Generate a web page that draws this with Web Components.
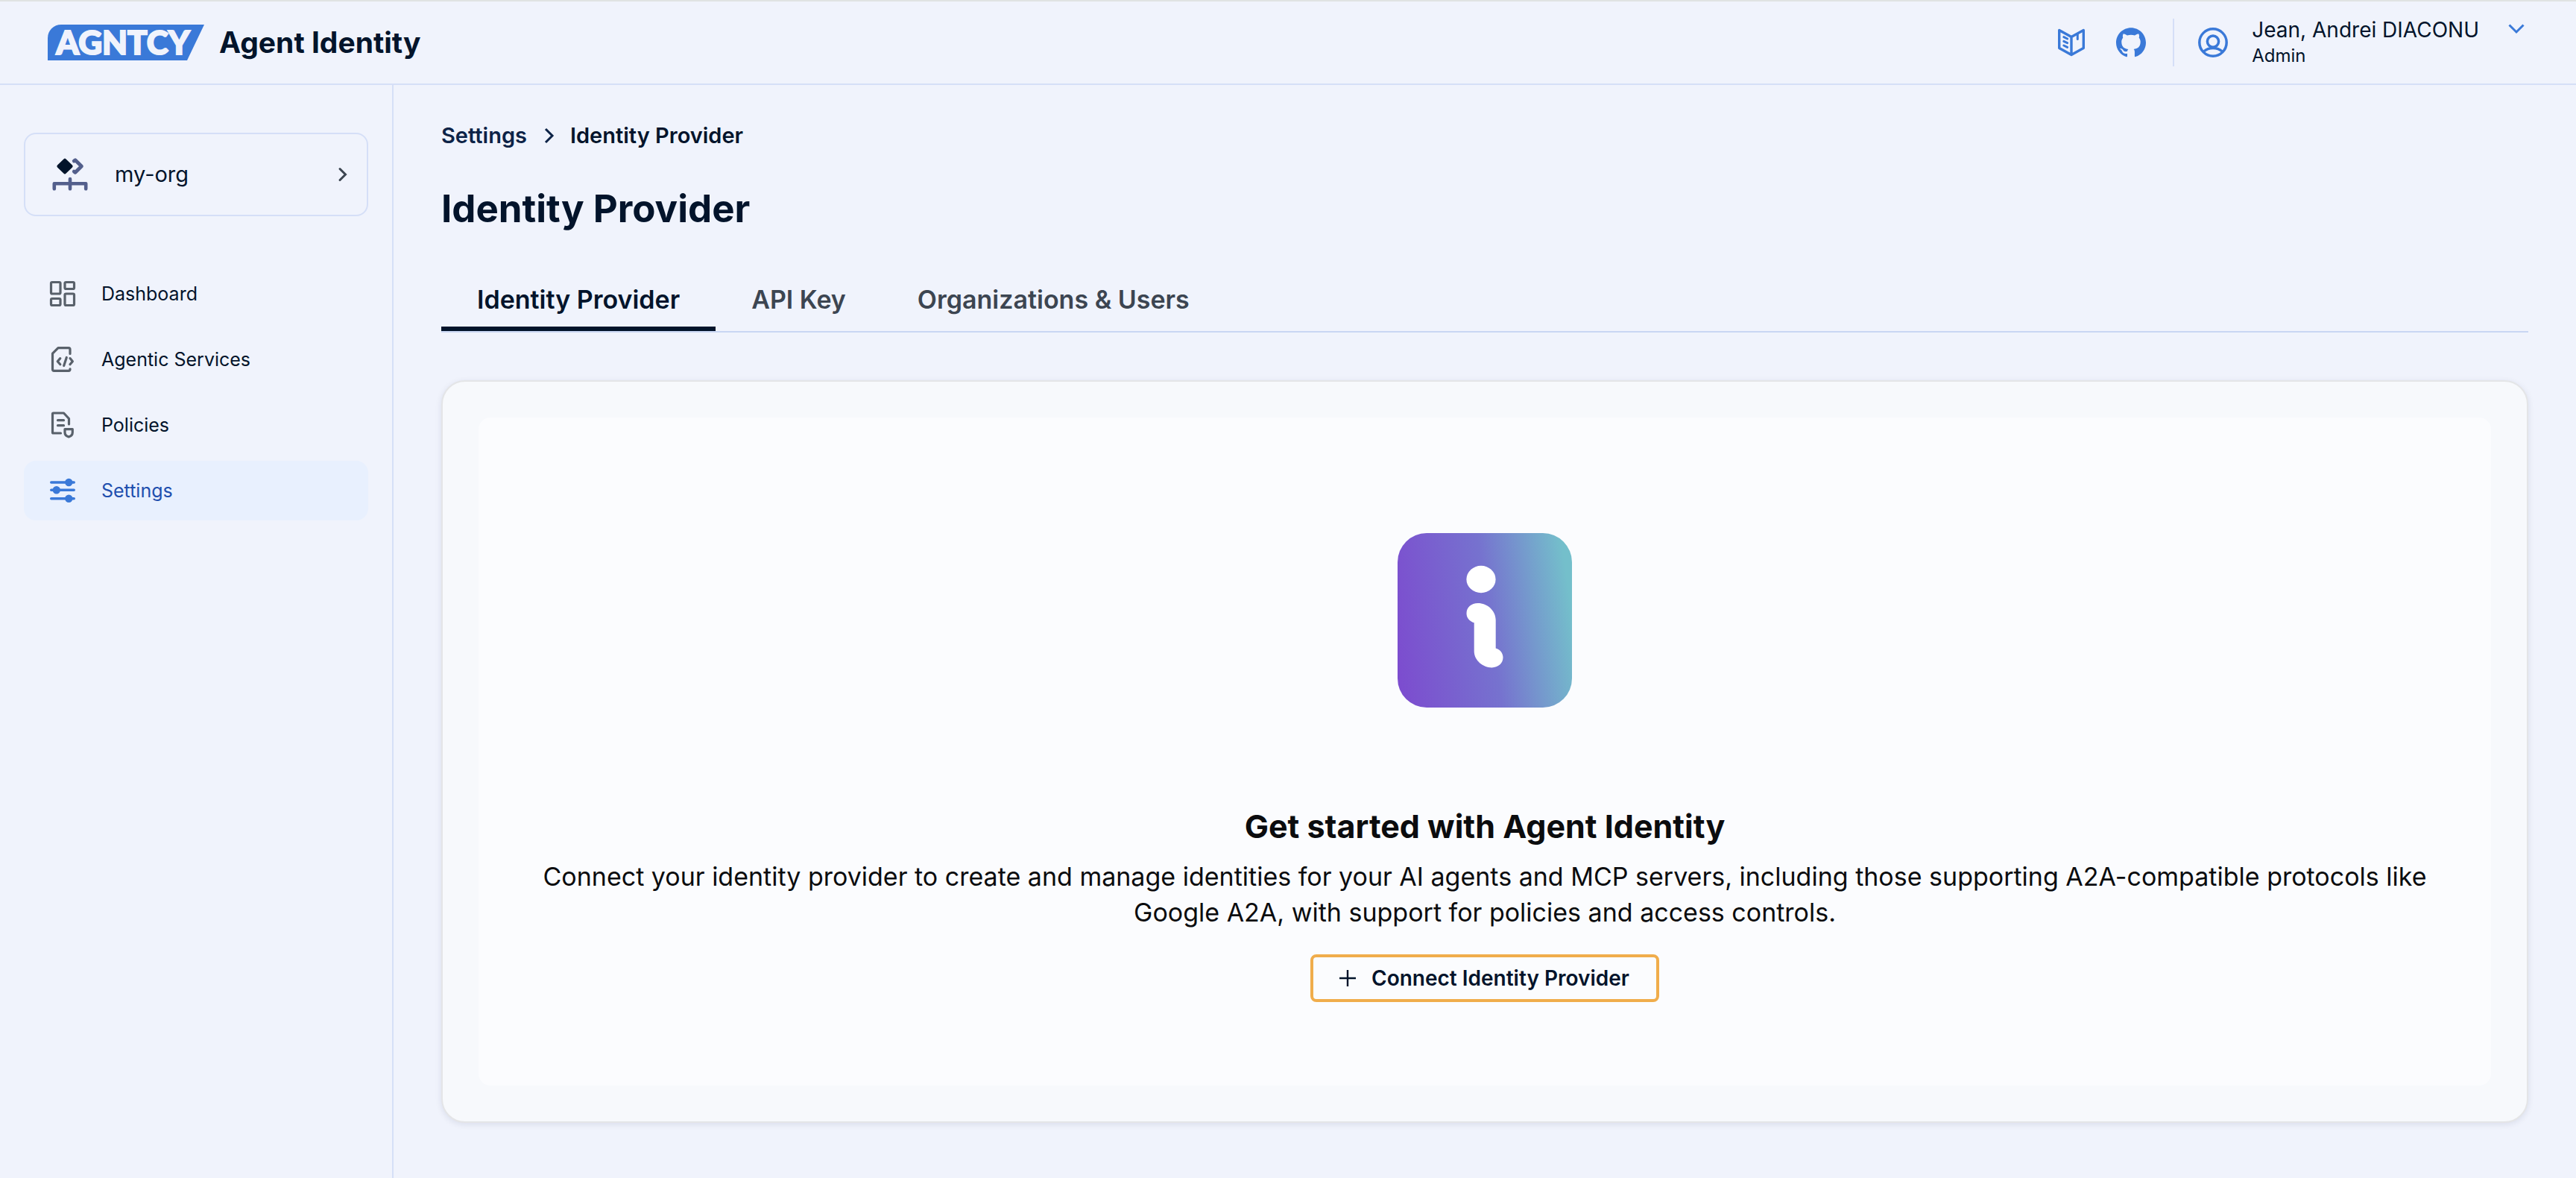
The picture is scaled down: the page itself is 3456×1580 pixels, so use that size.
<!DOCTYPE html>
<html lang="en">
<head>
<meta charset="utf-8">
<title>Agent Identity</title>
<style>
  :root {
    --bg: #f0f3fc;
    --line: #d5dff7;
    --ink: #03142b;
    --blue: #3a79d8;
  }
  body {
    margin: 0;
    background: var(--bg);
    color: var(--ink);
    font-family: Inter, "Liberation Sans", sans-serif;
    font-size: 28px;
    line-height: 40px;
  }
</style>
</head>
<body>
<app-shell>
  <app-header slot="header" product="Agent Identity" user="Jean, Andrei DIACONU" role-name="Admin"></app-header>
  <app-sidebar slot="sidebar">
    <org-switcher slot="org">my-org</org-switcher>
    <nav-item icon="dashboard">Dashboard</nav-item>
    <nav-item icon="services">Agentic Services</nav-item>
    <nav-item icon="policies">Policies</nav-item>
    <nav-item icon="settings" active>Settings</nav-item>
  </app-sidebar>
  <bread-crumb parent="Settings">Identity Provider</bread-crumb>
  <page-title>Identity Provider</page-title>
  <tab-bar>
    <tab-item selected>Identity Provider</tab-item>
    <tab-item>API Key</tab-item>
    <tab-item>Organizations &amp; Users</tab-item>
  </tab-bar>
  <content-card>
    <empty-state>
      <identity-logo slot="art"></identity-logo>
      <span slot="title">Get started with Agent Identity</span>
      <span slot="text">Connect your identity provider to create and manage identities for your AI agents and MCP servers, including those supporting A2A-compatible protocols like Google A2A, with support for policies and access controls.</span>
      <action-button slot="action">Connect Identity Provider</action-button>
    </empty-state>
  </content-card>
</app-shell>

<script>
const ICONS = {
  book: `<svg viewBox="0 0 48 48" fill="none" stroke="currentColor" stroke-width="3.4" stroke-linejoin="round" stroke-linecap="round">
    <path d="M7.7 7.5 24 16.6 40.3 7.5V31.4L24 40.5 7.7 31.4ZM24 17V40"/><path d="M32.3 12.5V19.5" stroke-width="3"/>
    <path d="M13.8 16.6 18.6 19M13.8 22.3 18.6 24.7M13.8 28 18.6 30.4" stroke-width="3"/></svg>`,
  github: `<svg viewBox="-2.4 -2.2 28.8 28.8" fill="currentColor"><path d="M12 .297c-6.63 0-12 5.373-12 12 0 5.303 3.438 9.8 8.205 11.385.6.113.82-.258.82-.577 0-.285-.01-1.04-.015-2.04-3.338.724-4.042-1.61-4.042-1.61C4.422 18.07 3.633 17.7 3.633 17.7c-1.087-.744.084-.729.084-.729 1.205.084 1.838 1.236 1.838 1.236 1.07 1.835 2.809 1.305 3.495.998.108-.776.417-1.305.76-1.605-2.665-.3-5.466-1.332-5.466-5.93 0-1.31.465-2.38 1.235-3.22-.135-.303-.54-1.523.105-3.176 0 0 1.005-.322 3.3 1.23.96-.267 1.98-.399 3-.405 1.02.006 2.04.138 3 .405 2.28-1.552 3.285-1.23 3.285-1.23.645 1.653.24 2.873.12 3.176.765.84 1.23 1.91 1.23 3.22 0 4.61-2.805 5.625-5.475 5.92.42.36.81 1.096.81 2.22 0 1.606-.015 2.896-.015 3.286 0 .315.21.69.825.57C20.565 22.092 24 17.592 24 12.297c0-6.627-5.373-12-12-12"/></svg>`,
  user: `<svg viewBox="0 0 48 48" fill="none" stroke="currentColor" stroke-width="3.5">
    <circle cx="24" cy="24" r="18.2"/><circle cx="24" cy="22.6" r="7.6"/><path d="M11 36.5C14.5 33.6 19 31.6 24 31.6S33.500 33.600 37 36.500"/></svg>`,
  down: `<svg viewBox="0 0 32 32" fill="none" stroke="currentColor" stroke-width="3"><path d="M6.500 11.500 16 21 25.500 11.500"/></svg>`,
  right: `<svg viewBox="0 0 32 32" fill="none" stroke="currentColor" stroke-width="3" stroke-linecap="round"><path d="M12 8.500 19.500 16 12 23.500"/></svg>`,
  crumb: `<svg viewBox="0 0 26 26" fill="none" stroke="currentColor" stroke-width="3"><path d="M9 4 18 13 9 22"/></svg>`,
  plus: `<svg viewBox="0 0 32 32" fill="none" stroke="currentColor" stroke-width="2.400"><path d="M16 5V27M5 16H27"/></svg>`,
  org: `<svg viewBox="0 0 48 48" fill="none" stroke-linejoin="round" stroke-linecap="round">
    <path d="M17 4.600 25.600 13 17 21.400 8.400 13Z" fill="#03142b" stroke="#03142b" stroke-width="4"/>
    <path d="M29.300 6 31 4.700 39.400 13 31 21.300 29.300 20" stroke="#535f8c" stroke-width="4.800"/>
    <path d="M2.800 43.300V36.200H45.200V43.300M24 30V43.300" stroke="#535f8c" stroke-width="4.600"/></svg>`,
  dashboard: `<svg viewBox="0 0 48 48" fill="none" stroke="currentColor" stroke-width="3.2">
    <rect x="8.500" y="8.500" width="12.500" height="15.500" rx="1.500"/><rect x="27" y="8.500" width="12.500" height="9" rx="1.500"/>
    <rect x="8.500" y="30.500" width="12.500" height="9" rx="1.500"/><rect x="27" y="24" width="12.500" height="15.500" rx="1.500"/></svg>`,
  services: `<svg viewBox="0 0 48 48" fill="none" stroke="currentColor" stroke-width="3.2" stroke-linecap="round" stroke-linejoin="round">
    <path d="M34 16.500V10.700A2 2 0 0 0 32 8.700H18L10.500 16.200V37.300A2 2 0 0 0 12.500 39.300H32A2 2 0 0 0 34 37.300V36.800"/>
    <path d="M20.800 22.600 17.200 26.700 20.800 30.800M29.300 21.500 25.700 32.500M34 22.600 37.400 26.700 34 30.800"/></svg>`,
  policies: `<svg viewBox="0 0 48 48" fill="none" stroke="currentColor" stroke-width="3.2" stroke-linecap="round" stroke-linejoin="round">
    <path d="M32.500 23V15.500L25.500 8H11.500A1 1 0 0 0 10.500 9V34A1 1 0 0 0 11.500 35H21.500M17.500 17.700H25.500M17.500 24.700H25.500"/>
    <path d="M27 29.600H37.300V34C37.300 37 35.500 39 32.200 40 28.800 39 27 37 27 34Z"/></svg>`,
  settings: `<svg viewBox="0 0 48 48" fill="currentColor" stroke="currentColor" stroke-width="3.600" stroke-linecap="round">
    <path d="M8.800 13H39.200M8.800 23.300H39.200M8.800 34.800H39.200"/><g stroke="none"><circle cx="32.300" cy="13" r="5.200"/><circle cx="15.800" cy="23.300" r="5.200"/><circle cx="32.300" cy="34.800" r="5.200"/></g></svg>`
};

const define = (name, render) => customElements.define(name, class extends HTMLElement {
  constructor() { super(); this.attachShadow({ mode: 'open' }); }
  connectedCallback() { this.shadowRoot.innerHTML = render(this); }
});

define('ui-icon', el => `<style>
  :host { display: block; flex: none; width: 48px; height: 48px; }
  svg { display: block; width: 100%; height: 100%; }
</style>${ICONS[el.getAttribute('name')]}`);

define('app-shell', () => `<style>
  :host { display: flex; flex-direction: column; min-height: 100vh; }
  .body { display: flex; flex: 1; }
  main { flex: 1; min-width: 0; padding: 48px 64px 64px; }
</style>
<slot name="header"></slot>
<div class="body"><slot name="sidebar"></slot><main><slot></slot></main></div>`);

define('brand-logo', () => `<style>
  :host { display: block; }
  svg { display: block; width: 210px; height: 48px; overflow: visible; }
  text { font: 900 44px Lato, Inter, sans-serif; }
</style>
<svg viewBox="0 0 210 48" role="img" aria-label="AGNTCY">
  <path d="M18 0H210L187 48H0V18A18 18 0 0 1 18 0Z" fill="#3a79d8"/>
  <text x="101" y="40" text-anchor="middle" fill="#f0f3fc" stroke="#f0f3fc" stroke-width="2">AGNTCY</text>
</svg>`);

define('app-header', el => `<style>
  :host { display: block; border-top: 2px solid #e0e3e2; border-bottom: 2px solid var(--line); }
  header { display: flex; align-items: center; height: 110px; padding: 0 64px; }
  .brand { display: flex; align-items: center; gap: 20px; flex: 1; color: inherit; text-decoration: none; }
  .name { font-size: 39px; line-height: 48px; font-weight: 700; }
  .links { display: flex; gap: 32px; padding-right: 32px; border-right: 2px solid var(--line); height: 64px; align-items: center; }
  .links a, .user ui-icon { color: var(--blue); }
  .user { display: flex; align-items: center; gap: 28px; padding-left: 28px; }
  .who { line-height: 36px; }
  .role { font-size: 24px; line-height: 34px; }
  button { align-self: flex-start; border: 0; padding: 0; margin-left: 6px; background: none; color: var(--blue); }
  button ui-icon { width: 32px; height: 32px; }
</style>
<header>
  <a class="brand" href="#"><brand-logo></brand-logo><span class="name">${el.getAttribute('product')}</span></a>
  <div class="links">
    <a href="#docs" aria-label="Documentation"><ui-icon name="book"></ui-icon></a>
    <a href="#github" aria-label="GitHub"><ui-icon name="github"></ui-icon></a>
  </div>
  <div class="user">
    <ui-icon name="user"></ui-icon>
    <div><div class="who">${el.getAttribute('user')}</div><div class="role">${el.getAttribute('role-name')}</div></div>
    <button aria-label="Account menu"><ui-icon name="down"></ui-icon></button>
  </div>
</header>`);

define('app-sidebar', () => `<style>
  :host { display: block; box-sizing: border-box; flex: none; width: 528px; padding: 64px 32px; border-right: 2px solid var(--line); }
  nav { display: flex; flex-direction: column; gap: 8px; margin-top: 64px; }
</style>
<slot name="org"></slot><nav><slot></slot></nav>`);

define('org-switcher', () => `<style>
  :host { display: block; font-size: 29px; }
  button { display: flex; align-items: center; gap: 36px; box-sizing: border-box; width: 100%; height: 112px; padding: 0 16px 0 36px;
    border: 2px solid var(--line); border-radius: 16px; background: none; color: inherit; font: inherit; text-align: left; }
  span { flex: 1; }
  ui-icon.go { width: 32px; height: 32px; color: #3c4551; }
</style>
<button><ui-icon name="org"></ui-icon><span><slot></slot></span><ui-icon class="go" name="right"></ui-icon></button>`);

define('nav-item', el => `<style>
  :host { display: block; }
  a { display: flex; align-items: center; gap: 28px; height: 80px; padding: 0 28px; border-radius: 16px; color: inherit; text-decoration: none; font-size: 25px; }
  ui-icon { color: #59616b; }
  :host([active]) a { background: #e8f0fe; color: #1f4fae; }
  :host([active]) ui-icon { color: var(--blue); }
</style>
<a href="#${el.getAttribute('icon')}"><ui-icon name="${el.getAttribute('icon')}"></ui-icon><span><slot></slot></span></a>`);

define('bread-crumb', el => `<style>
  :host { display: block; font-size: 29px; font-weight: 600; }
  nav { display: flex; align-items: center; gap: 16px; }
  a, ui-icon { color: #0d2347; text-decoration: none; }
  ui-icon { width: 26px; height: 26px; }
</style>
<nav aria-label="Breadcrumb"><a href="#settings">${el.getAttribute('parent')}</a><ui-icon name="crumb"></ui-icon><span aria-current="page"><slot></slot></span></nav>`);

define('page-title', () => `<style>
  :host { display: block; margin: 46px 0 48px; }
  h1 { margin: 0; font-size: 51px; line-height: 64px; font-weight: 700; }
</style><h1><slot></slot></h1>`);

define('tab-bar', () => `<style>
  :host { display: flex; border-bottom: 2px solid #c9d6f3; margin-bottom: 64px; }
</style><slot></slot>`);

define('tab-item', el => `<style>
  :host { display: block; }
  button { display: block; border: 0; border-bottom: 6px solid transparent; background: none; padding: 24px 48px 18px;
    font: inherit; font-size: 34px; line-height: 36px; font-weight: 600; color: #3c4551; }
  :host([selected]) button { color: var(--ink); border-color: var(--ink); }
</style><button role="tab" aria-selected="${el.hasAttribute('selected')}"><slot></slot></button>`);

define('content-card', () => `<style>
  :host { display: block; padding: 48px; border: 2px solid #e4e5e7; border-radius: 32px; background: #f7f9fc; box-shadow: 0 2px 8px rgba(20, 30, 80, .1); }
</style><slot></slot>`);

define('identity-logo', () => `<style>
  :host { display: flex; align-items: center; justify-content: center; height: 320px; }
  svg { display: block; width: 234px; height: 234px; }
</style>
<svg viewBox="0 0 234 234" role="img" aria-label="Agent Identity">
  <defs><linearGradient id="g" gradientUnits="userSpaceOnUse" x1="0" y1="170" x2="238" y2="136">
    <stop offset="0" stop-color="#7c4dcf"/><stop offset=".54" stop-color="#7672cf"/><stop offset="1" stop-color="#74bfcb"/>
  </linearGradient></defs>
  <rect width="234" height="234" rx="39" fill="url(#g)"/>
  <ellipse cx="112" cy="62" rx="19.600" ry="18.200" fill="#fff"/>
  <path fill="#fff" d="M92.500 107.700C92.500 99.500 99 94 107.700 94C120.500 94 131.700 104 131.700 116.500V154.500C137.500 156 141.500 161 141.500 166.800C141.500 174.500 135 180.400 126.300 180.400C115 180.400 102.700 171 102.700 158.500V120.200C96.500 118.300 92.500 113.500 92.500 107.700Z"/>
</svg>`);

define('empty-state', () => `<style>
  :host { display: flex; flex-direction: column; align-items: center; padding: 112px 48px; border-radius: 16px; background: #fbfcfe; color: #0b0c0e; text-align: center; }
  h2 { margin: 88px 0 16px; font-size: 43px; line-height: 56px; font-weight: 700; }
  p { margin: 0 0 32px; font-size: 34px; line-height: 48px; }
</style>
<slot name="art"></slot>
<h2><slot name="title"></slot></h2>
<p><slot name="text"></slot></p>
<slot name="action"></slot>`);

define('action-button', () => `<style>
  :host { display: block; color: var(--ink); }
  button { display: flex; align-items: center; gap: 16px; height: 64px; padding: 0 36px 0 30px; border: 4px solid #f0ad4b; border-radius: 8px;
    background: none; color: inherit; font: inherit; font-weight: 600; }
  ui-icon { width: 32px; height: 32px; }
</style><button><ui-icon name="plus"></ui-icon><span><slot></slot></span></button>`);
</script>
</body>
</html>
